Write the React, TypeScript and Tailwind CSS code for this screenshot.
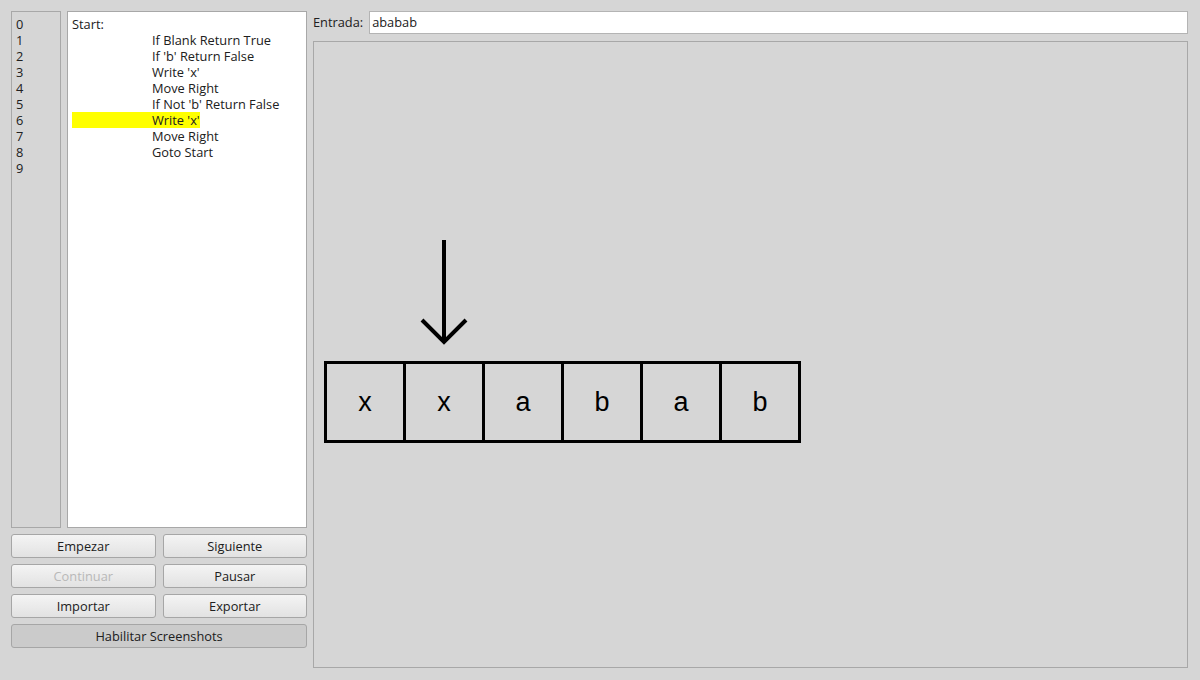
import React from "react";

const lines: { label?: string; text?: string }[] = [
  { label: "Start:" },
  { text: "If Blank Return True" },
  { text: "If 'b' Return False" },
  { text: "Write 'x'" },
  { text: "Move Right" },
  { text: "If Not 'b' Return False" },
  { text: "Write 'x'" },
  { text: "Move Right" },
  { text: "Goto Start" },
];

const tape = ["x", "x", "a", "b", "a", "b"];

function Btn({ label, disabled }: { label: string; disabled?: boolean }) {
  return (
    <button
      className={`h-6 rounded-[3px] border border-[#a6a6a6] bg-gradient-to-b from-[#f4f4f4] to-[#e2e2e2] pt-px text-[12.8px] ${
        disabled ? "text-[#b8b8b8]" : "text-[#202020]"
      }`}
    >
      {label}
    </button>
  );
}

export default function App() {
  const active = 6;
  return (
    <div
      className="flex h-[680px] w-[1200px] gap-[6px] bg-[#d6d6d6] pt-[11px] pr-[12px] pb-[12px] pl-[11px] text-[12.8px] text-[#202020]"
      style={{ fontFamily: '"Open Sans", "Noto Sans", sans-serif' }}
    >
      {/* LEFT: program listing + controls */}
      <div className="flex w-[296px] flex-col">
        <div className="flex h-[517px] gap-[6px]">
          <div className="w-[50px] border border-[#a8a8a8] bg-[#d6d6d6] pt-1 pl-1 leading-4">
            {Array.from({ length: 10 }, (_, i) => (
              <div key={i}>{i}</div>
            ))}
          </div>
          <div className="flex-1 border border-[#a8a8a8] bg-white pt-1 pl-1 leading-4">
            {lines.map((l, i) => (
              <div key={i} className="h-4 whitespace-nowrap">
                {l.label ? (
                  l.label
                ) : (
                  <span className={`inline-block pl-[80px] ${i === active ? "bg-[#ffff00]" : ""}`}>
                    {l.text}
                  </span>
                )}
              </div>
            ))}
          </div>
        </div>

        {/* BUTTONS */}
        <div className="mt-[6px] grid grid-cols-2 gap-x-[7px] gap-y-[6px]">
          <Btn label="Empezar" />
          <Btn label="Siguiente" />
          <Btn label="Continuar" disabled />
          <Btn label="Pausar" />
          <Btn label="Importar" />
          <Btn label="Exportar" />
          <button className="col-span-2 h-6 rounded-[3px] border border-[#a6a6a6] bg-[#cbcbcb] pt-px text-[12.8px] text-[#202020]">
            Habilitar Screenshots
          </button>
        </div>
      </div>

      {/* RIGHT: input + tape canvas */}
      <div className="flex flex-1 flex-col">
        <div className="flex h-[23px] items-center gap-[6px]">
          <span>Entrada:</span>
          <div className="flex h-[23px] flex-1 items-center border border-[#b4b4b4] bg-white pl-[2px]">
            ababab
          </div>
        </div>
        <div className="mt-[7px] flex-1 border border-[#a8a8a8] bg-[#d6d6d6]">
          <div className="pt-[196px] pl-[105px]">
            <svg width="50" height="110" viewBox="0 0 50 110">
              <line x1="25" y1="2" x2="25" y2="104" stroke="black" strokeWidth="4" />
              <polyline points="3,82 25,104 47,82" fill="none" stroke="black" strokeWidth="4" />
            </svg>
          </div>
          <div className="mt-[13px] ml-[10px] flex">
            {tape.map((c, i) => (
              <div
                key={i}
                className={`flex h-[82px] w-[79px] items-center justify-center border-y-[3px] border-l-[3px] border-black text-[27px] text-black ${
                  i === tape.length - 1 ? "w-[82px] border-r-[3px]" : ""
                }`}
                style={{ fontFamily: '"Liberation Sans", Arial, sans-serif' }}
              >
                {c}
              </div>
            ))}
          </div>
        </div>
      </div>
    </div>
  );
}
